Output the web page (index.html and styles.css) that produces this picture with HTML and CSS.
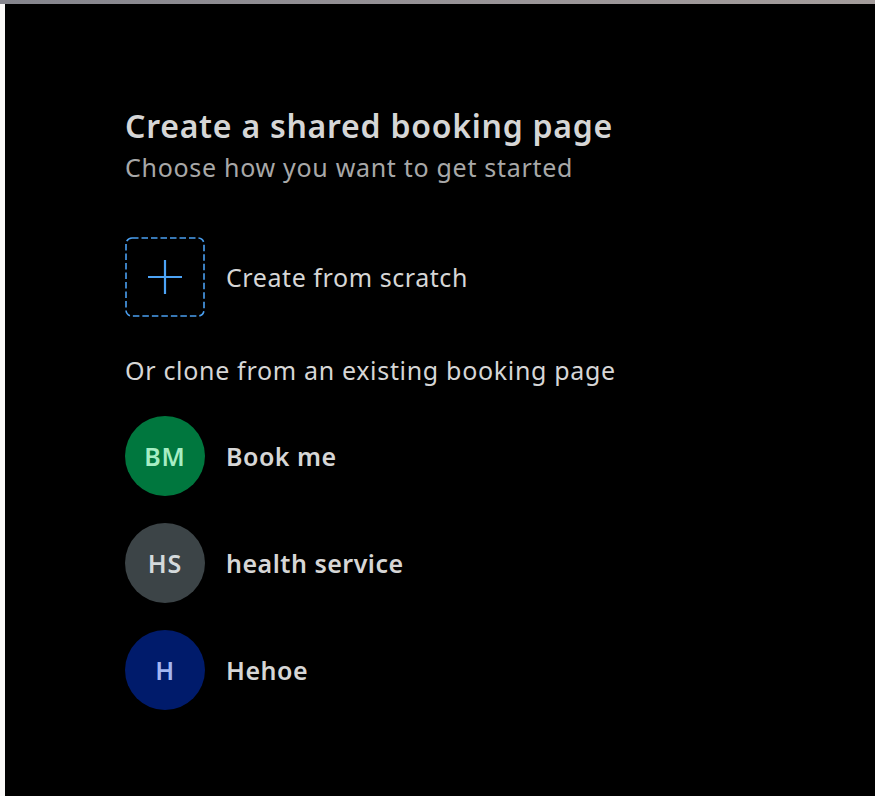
FILE: index.html
```html
<!DOCTYPE html>
<html lang="en">
<head>
<meta charset="utf-8">
<title>Create a shared booking page</title>
<link rel="stylesheet" href="styles.css">
</head>
<body>
<div class="topbar"></div>
<div class="shell">
  <div class="gutter"></div>
  <main class="panel">
    <h1 class="title">Create a shared booking page</h1>
    <p class="subtitle">Choose how you want to get started</p>

    <div class="option scratch">
      <div class="addbox">
        <svg class="dash" width="80" height="80" viewBox="0 0 80 80">
          <rect x="1" y="1" width="78" height="78" rx="6" ry="6" fill="none" stroke="#4a9ff0" stroke-width="1.6" stroke-dasharray="6.5 3"/>
        </svg>
        <svg class="plus" width="36" height="36" viewBox="0 0 36 36">
          <path d="M18 1v34M1 18h34" stroke="#4ca3f5" stroke-width="2.2" fill="none"/>
        </svg>
      </div>
      <span class="option-label">Create from scratch</span>
    </div>

    <p class="section">Or clone from an existing booking page</p>

    <ul class="pages">
      <li class="option">
        <span class="avatar green">BM</span>
        <span class="page-name">Book me</span>
      </li>
      <li class="option">
        <span class="avatar gray">HS</span>
        <span class="page-name">health service</span>
      </li>
      <li class="option">
        <span class="avatar navy">H</span>
        <span class="page-name">Hehoe</span>
      </li>
    </ul>
  </main>
</div>
</body>
</html>
```

FILE: styles.css
```css
* { box-sizing: border-box; }

html, body {
  margin: 0;
  padding: 0;
  height: 100%;
}

body {
  background: #faf9f8;
  font-family: "Noto Sans", "Open Sans", "DejaVu Sans", sans-serif;
  color: #d6d6d6;
  display: flex;
  flex-direction: column;
  overflow: hidden;
}

.topbar {
  height: 4px;
  flex: none;
  background: linear-gradient(to right, #85858d, #9a9598 60%, #a39c9b);
}

.shell {
  flex: 1;
  display: flex;
}

.gutter {
  width: 5px;
  flex: none;
  background: #faf9f8;
}

.panel {
  flex: 1;
  background: #000;
  padding: 102px 0 0 120px;
}

.title {
  margin: 0;
  font-size: 32px;
  line-height: 40px;
  font-weight: 600;
  color: #d6d6d6;
  letter-spacing: 0.75px;
}

.subtitle {
  margin: 5px 0 0;
  font-size: 25px;
  line-height: 32px;
  color: #a8a8a8;
  letter-spacing: 0.7px;
}

.option {
  display: flex;
  align-items: center;
  gap: 21px;
}

.scratch {
  margin-top: 54px;
}

.addbox {
  position: relative;
  width: 80px;
  height: 80px;
  flex: none;
  display: flex;
  align-items: center;
  justify-content: center;
}

.dash {
  position: absolute;
  left: 0;
  top: 0;
}

.option-label {
  font-size: 25px;
  line-height: 32px;
  color: #d6d6d6;
  letter-spacing: 0.57px;
}

.section {
  margin: 37px 0 0;
  font-size: 25px;
  line-height: 32px;
  color: #d6d6d6;
  letter-spacing: 0.68px;
}

.pages {
  list-style: none;
  margin: 30px 0 0;
  padding: 0;
  display: flex;
  flex-direction: column;
  gap: 27px;
}

.avatar {
  width: 80px;
  height: 80px;
  flex: none;
  border-radius: 50%;
  display: flex;
  align-items: center;
  justify-content: center;
  font-size: 25px;
  font-weight: 600;
  letter-spacing: 0.8px;
}

.green { background: #00773e; color: #a6eec4; }
.gray { background: #3c4447; color: #d4dadc; }
.navy { background: #001b6b; color: #a3b6f2; }

.page-name {
  font-size: 25px;
  font-weight: 600;
  line-height: 32px;
  color: #d6d6d6;
  letter-spacing: 0.5px;
}
```
